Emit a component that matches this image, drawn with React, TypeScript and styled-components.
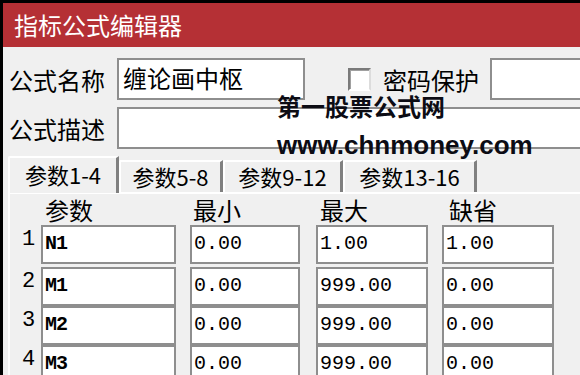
import * as React from 'react'
import styled, { createGlobalStyle } from 'styled-components'

const GlobalStyle = createGlobalStyle`
  html, body {
    margin: 0;
    padding: 0;
    background: #000;
  }
  body {
    font-family: "Noto Sans CJK SC", "Liberation Sans", sans-serif;
  }
`

const cjk = `"Noto Sans CJK SC", "Liberation Sans", sans-serif`
const mono = `"Liberation Mono", "Noto Sans CJK SC", monospace`

const Window = styled.div`
  position: relative;
  width: 577px;
  height: 372px;
  margin: 3px 0 0 3px;
  background: #f0f0f0;
  overflow: hidden;
  display: flex;
  flex-direction: column;
`

const TitleBar = styled.div`
  height: 44px;
  background: #b53035;
  color: #fff;
  font-family: ${cjk};
  font-size: 24px;
  line-height: 44px;
  padding-left: 11px;
  flex-shrink: 0;
`

const Body = styled.div`
  padding: 11px 0 0 4px;
  display: flex;
  flex-direction: column;
`

const FieldRow = styled.div<{ $mt?: number }>`
  display: flex;
  align-items: center;
  height: 42px;
  margin-top: ${(p) => p.$mt ?? 0}px;
`

const Label = styled.div`
  font-family: ${cjk};
  font-size: 24px;
  color: #000;
  width: 110px;
  padding-left: 2px;
  box-sizing: border-box;
  flex-shrink: 0;
`

const TextBox = styled.div<{ $w?: number }>`
  box-sizing: border-box;
  height: 100%;
  width: ${(p) => (p.$w ? `${p.$w}px` : 'auto')};
  flex: ${(p) => (p.$w ? '0 0 auto' : '1 0 auto')};
  margin-right: ${(p) => (p.$w ? 0 : -4)}px;
  background: #fff;
  border: 2px solid #8e8e8e;
  font-family: ${cjk};
  font-size: 24px;
  line-height: 36px;
  padding-left: 4px;
  color: #000;
`

const CheckBox = styled.div`
  box-sizing: border-box;
  width: 23px;
  height: 23px;
  margin-left: 43px;
  background: #fff;
  border-top: 2px solid #7a7a7a;
  border-left: 2px solid #7a7a7a;
  border-right: 2px solid #dcdcdc;
  border-bottom: 2px solid #ffffff;
  box-shadow: inset 1px 1px 0 #a0a0a0;
`

const CheckLabel = styled.div`
  font-family: ${cjk};
  font-size: 24px;
  margin-left: 12px;
  margin-right: 11px;
`

const Watermark = styled.div`
  position: absolute;
  left: 274px;
  color: #0c0c14;
  font-weight: bold;
  white-space: nowrap;
`

const WmTitle = styled(Watermark)`
  top: 88px;
  font-family: ${cjk};
  font-size: 24px;
  line-height: 30px;
`

const WmUrl = styled(Watermark)`
  top: 127px;
  font-family: "Liberation Sans", sans-serif;
  font-size: 26px;
  line-height: 30px;
`

const TabStrip = styled.div`
  display: flex;
  align-items: flex-end;
  height: 37px;
  margin-top: 6px;
  padding-left: 1px;
`

const Tab = styled.div<{ $active?: boolean; $w: number }>`
  box-sizing: border-box;
  width: ${(p) => p.$w}px;
  height: ${(p) => (p.$active ? 37 : 32)}px;
  border-top: 2px solid #fff;
  border-left: 2px solid #fff;
  border-right: 3px solid #808080;
  border-top-left-radius: 2px;
  font-family: ${cjk};
  font-size: 22px;
  line-height: ${(p) => (p.$active ? 32 : 28)}px;
  text-align: center;
  color: #000;
  background: #f0f0f0;
  position: relative;
  margin-bottom: ${(p) => (p.$active ? -1 : 0)}px;
  z-index: ${(p) => (p.$active ? 1 : 0)};
`

const Panel = styled.div`
  border-top: 2px solid #fff;
  border-left: 2px solid #fff;
  margin-left: 1px;
  padding: 4px 0 0 6px;
`

const Table = styled.div`
  display: flex;
  flex-direction: column;
`

const HeadRow = styled.div`
  display: flex;
  height: 27px;
  font-family: ${cjk};
  font-size: 24px;
  line-height: 24px;
`

const Head = styled.div<{ $w: number; $pl?: number }>`
  width: ${(p) => p.$w}px;
  padding-left: ${(p) => p.$pl ?? 0}px;
  box-sizing: border-box;
  flex-shrink: 0;
`

const DataRow = styled.div<{ $mt: number }>`
  display: flex;
  align-items: stretch;
  height: 39px;
  margin-top: ${(p) => p.$mt}px;
`

const RowNum = styled.div`
  width: 25px;
  flex-shrink: 0;
  font-family: ${mono};
  font-size: 22px;
  line-height: 30px;
  padding-left: 6px;
  box-sizing: border-box;
`

const Cell = styled.div<{ $w: number; $gap: number; $name?: boolean }>`
  box-sizing: border-box;
  width: ${(p) => p.$w}px;
  margin-right: ${(p) => p.$gap}px;
  flex-shrink: 0;
  background: #fff;
  border: 2px solid #8e8e8e;
  font-family: ${mono};
  font-size: 20px;
  line-height: 34px;
  padding-left: 2px;
  font-weight: ${(p) => (p.$name ? 'bold' : 'normal')};
  letter-spacing: ${(p) => (p.$name ? '-1px' : '0')};
  color: #000;
`

const rows = [
  { name: 'N1', min: '0.00', max: '1.00', def: '1.00', mt: 0 },
  { name: 'M1', min: '0.00', max: '999.00', def: '0.00', mt: 3 },
  { name: 'M2', min: '0.00', max: '999.00', def: '0.00', mt: 0 },
  { name: 'M3', min: '0.00', max: '999.00', def: '0.00', mt: 0 },
]

export default function App() {
  return (
    <>
      <GlobalStyle />
      <Window>
        <TitleBar>指标公式编辑器</TitleBar>
        <Body>
          <FieldRow>
            <Label>公式名称</Label>
            <TextBox $w={188}>缠论画中枢</TextBox>
            <CheckBox />
            <CheckLabel>密码保护</CheckLabel>
            <TextBox />
          </FieldRow>
          <FieldRow $mt={7}>
            <Label>公式描述</Label>
            <TextBox />
          </FieldRow>
          <TabStrip>
            <Tab $active $w={111}>参数1-4</Tab>
            <Tab $w={104}>参数5-8</Tab>
            <Tab $w={120}>参数9-12</Tab>
            <Tab $w={134}>参数13-16</Tab>
          </TabStrip>
          <Panel>
            <Table>
              <HeadRow>
                <Head $w={177} $pl={29}>参数</Head>
                <Head $w={127}>最小</Head>
                <Head $w={129}>最大</Head>
                <Head $w={112}>缺省</Head>
              </HeadRow>
              {rows.map((r, i) => (
                <DataRow key={r.name} $mt={r.mt}>
                  <RowNum>{i + 1}</RowNum>
                  <Cell $w={135} $gap={14} $name>
                    {r.name}
                  </Cell>
                  <Cell $w={110} $gap={16}>
                    {r.min}
                  </Cell>
                  <Cell $w={112} $gap={14}>
                    {r.max}
                  </Cell>
                  <Cell $w={112} $gap={0}>
                    {r.def}
                  </Cell>
                </DataRow>
              ))}
            </Table>
          </Panel>
        </Body>
        <WmTitle>第一股票公式网</WmTitle>
        <WmUrl>www.chnmoney.com</WmUrl>
      </Window>
    </>
  )
}
